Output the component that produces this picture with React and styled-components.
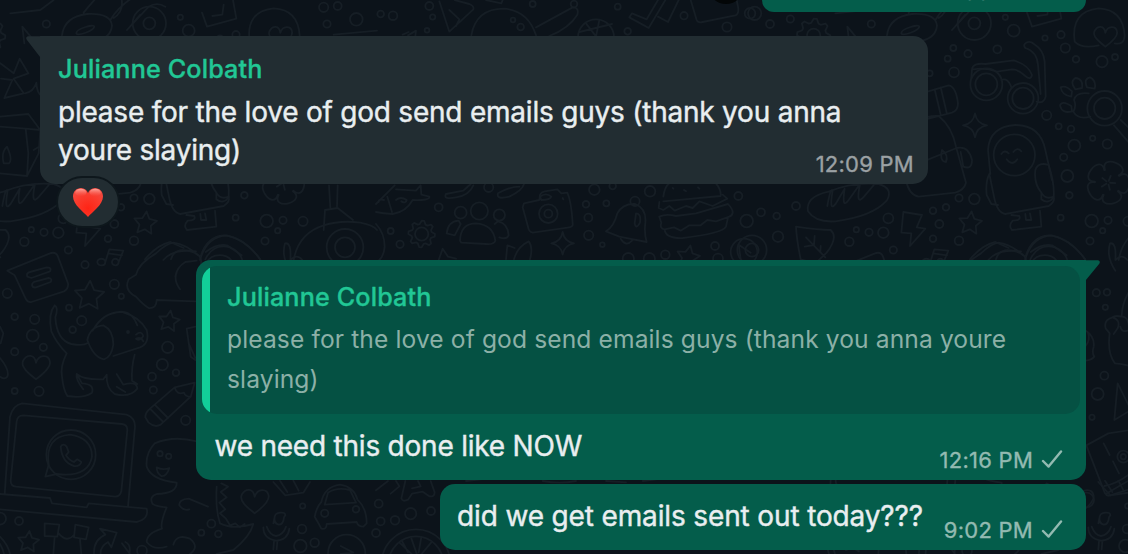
import React from "react";
import styled, { createGlobalStyle } from "styled-components";

const GlobalStyle = createGlobalStyle`
  html, body { margin: 0; padding: 0; background: #0c1319; }
  body { font-family: Inter, "Liberation Sans", sans-serif; overflow: hidden; }
`;

const Chat = styled.main`
  position: relative;
  width: 1128px;
  height: 554px;
  overflow: hidden;
  background: #0c131a;
`;

const Wallpaper = styled.svg`
  position: absolute;
  inset: 0;
  width: 100%;
  height: 100%;
`;

const Thread = styled.div`
  position: relative;
  display: flex;
  flex-direction: column;
  padding: 0 42px 0 40px;
`;

const Row = styled.div`
  display: flex;
  justify-content: ${(p) => (p.$out ? "flex-end" : "flex-start")};
  margin-top: ${(p) => p.$gap || 0}px;
`;

const Bubble = styled.article`
  position: relative;
  box-sizing: border-box;
  width: ${(p) => p.$w}px;
  height: ${(p) => p.$h}px;
  padding: ${(p) => p.$pad || "0"};
  border-radius: ${(p) => p.$radius || "15px"};
  background: ${(p) => (p.$out ? "#045d4b" : "#222d32")};
`;

const Tail = styled.svg`
  position: absolute;
  top: 0;
  ${(p) => (p.$out ? "right: -14px;" : "left: -14px;")}
  width: 15px;
  height: 23px;
  fill: ${(p) => (p.$out ? "#045d4b" : "#222d32")};
`;

const Sender = styled.div`
  font-size: 25.2px;
  font-weight: 500;
  line-height: 32px;
  letter-spacing: 0.14px;
  color: #21c795;
  -webkit-text-stroke: 0.35px currentColor;
  white-space: nowrap;
`;

const Body = styled.p`
  margin: ${(p) => p.$margin || "0"};
  font-size: 28px;
  line-height: 38px;
  letter-spacing: ${(p) => p.$ls || "-0.22px"};
  color: #e9eef0;
  -webkit-text-stroke: 0.4px currentColor;
  white-space: nowrap;
`;

const Meta = styled.div`
  position: absolute;
  right: ${(p) => p.$right}px;
  bottom: ${(p) => p.$bottom}px;
  display: flex;
  align-items: center;
  gap: 8px;
  font-size: 22px;
  line-height: 26px;
  letter-spacing: 0.25px;
  color: ${(p) => (p.$out ? "#93bab1" : "#9ba1a4")};
  -webkit-text-stroke: 0.35px currentColor;
  white-space: nowrap;
`;

const Quote = styled.blockquote`
  display: flex;
  box-sizing: border-box;
  height: 148px;
  margin: 0;
  border-radius: 15px;
  background: #055143;
  overflow: hidden;
`;

const QuoteBar = styled.span`
  flex: 0 0 8px;
  background: #12ce99;
`;

const QuoteContent = styled.div`
  padding: 15px 0 0 17px;
`;

const QuoteText = styled.p`
  margin: 6px 0 0;
  font-size: 24.6px;
  line-height: 40px;
  letter-spacing: 0.11px;
  color: #8cb0a7;
  white-space: nowrap;
`;

const Reaction = styled.div`
  position: absolute;
  left: 18px;
  top: 142px;
  display: flex;
  align-items: center;
  justify-content: center;
  width: 60px;
  height: 48px;
  border-radius: 24px;
  background: #222d32;
  box-shadow: 0 0 0 2px #0e171c;
`;

const Avatar = styled.div`
  position: absolute;
  left: 708px;
  top: -32px;
  width: 36px;
  height: 36px;
  border-radius: 50%;
  background: #030607;
`;

const HiddenLine = styled.div`
  position: absolute;
  right: 92px;
  top: -25px;
  font-size: 22px;
  line-height: 26px;
  color: #93bab1;
`;

const Tick = () => (
  <svg width="22" height="20" viewBox="0 0 22 20" fill="none" stroke="#93bab1" strokeWidth="2.4" strokeLinecap="round" strokeLinejoin="round">
    <path d="M2 11 7.600 16.600 20 1.500" />
  </svg>
);

const Heart = () => (
  <svg width="32" height="31" viewBox="0 0 32 31">
    <defs>
      <radialGradient id="heartFill" cx="50%" cy="70%" r="70%">
        <stop offset="0" stopColor="#ff2415" />
        <stop offset=".6" stopColor="#fa3a2c" />
        <stop offset="1" stopColor="#f2493f" />
      </radialGradient>
      <linearGradient id="heartShine" x1="0" y1="0" x2="0" y2="1">
        <stop offset="0" stopColor="#ffb7ae" stopOpacity=".85" />
        <stop offset="1" stopColor="#ff6a5c" stopOpacity="0" />
      </linearGradient>
    </defs>
    <path d="M16 30C12 25 1 18 1 9.5C1 4.500 4.500 1 9 1C12.500 1 15 3.200 16 6C17 3.200 19.500 1 23 1C27.500 1 31 4.500 31 9.500C31 18 20 25 16 30Z" fill="url(#heartFill)" />
    <ellipse cx="8.800" cy="5.500" rx="5.600" ry="3.800" fill="url(#heartShine)" />
    <ellipse cx="23.200" cy="5.500" rx="5.600" ry="3.800" fill="url(#heartShine)" />
  </svg>
);

/* Doodle wallpaper: drawn at three units per pixel. */
const starPath = (cx, cy, r, turn = 0) => {
  const pts = [];
  for (let i = 0; i < 10; i++) {
    const a = turn - Math.PI / 2 + (i * Math.PI) / 5;
    const d = i % 2 ? r * 0.5 : r;
    pts.push(`${(cx + d * Math.cos(a)).toFixed(1)} ${(cy + d * Math.sin(a)).toFixed(1)}`);
  }
  return `M${pts.join("L")}Z`;
};
const sparkPath = (x, y, r) =>
  `M${x} ${y - r}Q${x + 5} ${y - 5} ${x + r} ${y}Q${x + 5} ${y + 5} ${x} ${y + r}Q${x - 5} ${y + 5} ${x - r} ${y}Q${x - 5} ${y - 5} ${x} ${y - r}Z`;
const heartPath = (x, y, r) =>
  `M${x} ${y + r}C${x - r * 0.5} ${y + r * 0.6} ${x - r * 1.3} ${y} ${x - r} ${y - r * 0.5}C${x - r * 0.7} ${y - r} ${x - r * 0.1} ${y - r} ${x} ${y - r * 0.3}C${x + r * 0.2} ${y - r} ${x + r} ${y - r} ${x + r * 1.1} ${y - r * 0.4}C${x + r * 1.2} ${y + r * 0.1} ${x + r * 0.4} ${y + r * 0.7} ${x} ${y + r}Z`;
const flowerPath = (cx, cy, r) => {
  let d = "";
  for (let i = 0; i < 5; i++) {
    const a = -1.2 + (i * 2 * Math.PI) / 5;
    const p = (o, k) => `${(cx + k * Math.cos(a + o)).toFixed(1)} ${(cy + k * Math.sin(a + o)).toFixed(1)}`;
    d += `M${p(-0.6, r * 0.5)}C${p(-0.65, r * 1.2)} ${p(0.65, r * 1.2)} ${p(0.6, r * 0.5)}M${p(0, 6)}L${p(0, 22)}`;
  }
  return d;
};
const gearPath = (cx, cy, r) => {
  const pts = [];
  for (let i = 0; i < 32; i++) {
    const a = (i * Math.PI) / 16;
    const d = i % 4 < 2 ? r : r * 0.76;
    pts.push(`${(cx + d * Math.cos(a)).toFixed(1)} ${(cy + d * Math.sin(a)).toFixed(1)}`);
  }
  return `M${pts.join("L")}Z`;
};

const upper = {
  dots: [[8,40,20],[54,72,12],[115,57,11],[358,72,11],[785,92,18],[760,52,8],[927,104,11],[940,144,14],[879,114,8],[972,178,10],[1050,185,17],[1089,171,9],[604,144,9],[648,161,11],[587,176,9],[736,148,12],[606,217,15],[533,220,9],[884,346,14],[920,379,9],[957,387,10],[1022,415,8],[1066,432,14],[967,437,18],[935,472,11],[946,528,18],[952,586,10],[621,594,11],[667,597,16],[543,632,10],[582,622,10],[562,672,12],[409,655,15],[313,689,8],[351,697,11],[394,698,16],[292,725,13],[424,750,11],[543,716,10],[621,722,13],[926,653,9],[1019,663,19],[1068,661,11],[1052,692,8],[1014,723,11],[1128,664,14],[132,618,12],[27,637,12],[74,648,10],[78,710,16],
    [703,253,48],[703,253,33],[813,295,46],[813,295,32],[787,465,62],[1058,325,52],[1058,325,32],[667,70,50],[667,70,18],[185,106,20],[0,750,44],[0,750,20],[1190,22,14],[1232,18,12],[1288,58,19],[1200,72,11],[1254,742,55],[1254,742,30]],
  paths: [
    "M748 240Q768 232 778 262M660 208Q662 188 700 192L785 181Q830 195 840 225Q836 242 820 228Q800 208 780 208L735 215Q700 202 665 208M658 235L660 208M820 144Q855 155 858 195L866 282M820 144C808 132 830 118 846 132Q875 150 878 185L881 290Q876 312 854 305",
    sparkPath(669, 376, 36),
    "M715 522L708 450Q712 380 790 375Q865 375 880 450L900 540M905 590Q910 605 890 618L760 642Q735 638 726 590L712 522Q700 545 704 585L718 612L738 615",
    "M748 462q10 -14 22 -2M784 456q12 -16 24 -2M764 478Q780 500 796 478M850 510Q858 485 890 495Q908 550 905 590Q880 600 868 578Q845 550 850 510ZM868 578V598Q888 614 904 594",
    "M778 645L802 648Q808 662 782 662Q768 678 780 690L868 680L864 632M820 642L822 660H838L834 640",
    "M958 290Q930 286 926 262Q940 254 960 274ZM970 268Q952 246 970 234Q994 236 990 264ZM1005 262Q994 236 1014 232Q1034 242 1028 266ZM958 318Q930 300 924 316Q930 342 960 334ZM1010 280Q972 275 966 300Q974 318 964 335Q978 360 1015 350M1086 376L1150 450M1106 360L1180 430",
    "M968 125Q955 34 1040 25Q1114 28 1118 108Q1116 136 1088 130M968 125Q990 148 1040 136",
    heartPath(1060, 108, 32),
    "M405 106Q412 50 480 42Q550 38 555 76Q552 112 510 122H405M448 100C446 88 500 70 502 80C500 92 452 110 448 100ZM550 60Q580 10 640 -20M600 90L665 20Q690 5 715 20M600 90L640 44M470 38Q500 0 540 -40M576 -30Q600 30 560 54",
    gearPath(185, 106, 50),
    "M825 38L840 80L928 56L918 0M856 48L886 44L890 14M250 40L340 30L380 0M286 80L292 130M286 80L326 128",
    flowerPath(1068, 548, 78),
    "M168 634Q160 590 230 575Q300 545 380 552Q426 566 404 602Q360 650 250 664Q190 668 168 634ZM226 618Q236 560 242 572Q230 640 252 610L278 566Q268 630 290 600L324 552Q310 620 336 590L368 552",
    "M454 636L510 645L494 682L520 686L474 738L478 700L448 698Z",
    starPath(655, 670, 36, 0.1),
    "M132 680Q200 690 236 690Q260 712 224 758L190 790L146 778Q134 720 132 680ZM162 712L220 772M186 735L188 708M186 735L158 740M205 757L206 738",
    "M654 778Q690 735 730 726L770 744M732 778Q742 740 790 754Q826 762 822 790M822 766Q840 710 890 706Q950 710 1000 778M836 756Q870 730 900 736L944 766M838 790Q850 762 888 766Q910 770 918 790",
    "M516 278L590 256Q612 260 618 310Q618 332 600 338L530 356M548 268L566 344M566 262L584 338M470 400Q500 344 560 348Q600 380 612 440L642 548Q636 570 610 578L500 590Q470 584 462 540M500 490L614 444Q650 436 660 480Q660 510 634 500L626 456M570 450Q590 464 582 486Q562 484 570 450Z",
    "M219 350L304 342L340 390L335 460L300 528L219 520M219 380L296 386L340 390M296 386L304 460L300 528M230 490Q222 456 240 440Q258 480 246 490ZM320 450L336 440",
    "M220 190L260 220L278 176L304 220L260 236L290 280L232 294L256 240L222 236M294 280Q320 275 328 248Q330 282 345 288",
    "M1090 812Q1062 770 1074 730Q1094 726 1090 780Q1110 760 1126 780M1100 780Q1114 700 1190 676Q1240 660 1300 668Q1340 676 1350 690",
    "M1190 690L1194 630L1232 624L1278 660M1206 556L1210 624M1232 556L1230 620",
    "M1220 104L1350 92",
  ],
};

const lower = {
  dots: [[255,104,11],[343,163,14],[364,199,8],[207,233,9],[22,190,14],[44,260,10],[104,268,14],[98,317,18],[130,352,11],[44,365,11],[245,272,14],[218,299,10],[44,483,9],[117,484,14],[503,352,17],[487,404,17],[528,428,10],[456,440,12],[460,480,11],[557,571,14],[480,671,8],[506,679,8],[384,306,3],[908,828,8],[634,881,12],[604,908,9],[655,912,10],[906,897,13],[901,948,19],[944,938,13],[57,873,12],[0,866,18],[426,962,15],[213,674,74],[1068,838,10],[974,850,11],[1040,970,56],[814,188,11],[846,187,10],[841,232,8],[838,437,12],[818,492,18],[801,562,8],[895,680,18],[895,680,8],[785,810,22]],
  paths: [
    "M22 122L150 70Q168 64 174 80L204 160Q206 176 192 184L94 216Q84 218 78 208L44 136ZM82 140Q78 128 90 126L140 112Q156 112 150 124L94 144ZM96 166Q96 156 108 154L146 144Q158 146 152 156L108 172Q98 174 96 166Z",
    "M316 96L328 58L370 62L356 96M324 70L366 76M316 96A12 10 0 1 0 306 106Q316 106 316 96M356 96A10 10 0 1 0 348 106Q356 104 356 96",
    starPath(268, 198, 46, 0.05), starPath(507, 274, 33, 0.15), starPath(85, 936, 33, 0.1),
    "M586 214L470 210Q470 236 446 234Q430 225 408 200Q370 180 386 148L408 134Q416 100 468 70Q500 40 520 38Q560 44 594 76M490 90Q520 55 588 64M526 140Q530 112 556 96L590 92M540 178Q520 150 530 128M600 90Q620 20 680 16Q740 30 780 88M616 88Q640 38 690 52Q720 66 726 88",
    "M164 226Q144 250 154 304Q170 340 200 370Q180 410 186 440Q190 480 202 498Q250 506 276 488Q284 462 246 460L230 432Q226 448 250 478M164 226Q176 232 166 262Q170 330 214 342Q250 348 262 340M404 374Q394 410 396 452M230 432Q250 450 310 448L320 434Q318 475 344 492Q390 504 412 476Q410 452 370 464L350 432M262 330Q270 290 310 286Q340 300 340 344Q334 382 312 388Q280 382 262 330ZM278 302Q310 244 368 246Q420 262 440 300Q450 340 420 352L340 378M340 250Q390 230 412 286M408 314Q424 300 430 318Q420 335 408 326Q424 320 430 334M396 452L412 462M350 470L376 486",
    heartPath(108, 410, 38), heartPath(764, 812, 38),
    "M30 560Q38 526 66 520L380 554Q410 566 404 600L384 830M30 560L14 794M50 574Q52 556 70 556L366 582Q382 584 382 600L364 784Q360 800 346 800L48 770Q32 768 32 752ZM0 792L150 804L156 820L260 832L266 820L440 836Q448 866 410 876L0 838",
    "M146 704L136 740L170 732M146 704Q134 620 210 614Q276 624 276 680Q264 744 170 732M182 650Q190 638 200 650L206 666L198 676Q208 692 222 696L232 688L244 696Q240 710 222 708Q186 698 182 650Z",
    "M436 562Q436 546 450 536L524 472L584 458L572 500L482 584Q464 594 446 578ZM524 472Q530 496 552 488Q556 500 572 500M450 536L490 576M464 524L504 564",
    "M590 634Q520 616 464 640Q436 670 440 710Q454 750 530 758Q532 790 470 792Q446 800 458 822Q470 830 500 832Q480 880 486 896Q440 910 440 936Q460 962 500 950M470 712Q490 722 508 714Q500 740 484 738Q470 730 470 712ZM624 830L566 806Q536 808 538 826Q550 844 568 838M520 944Q530 910 570 926Q600 950 570 972M650 770Q646 840 660 880Q700 900 760 882Q750 920 700 960L650 972M664 760L684 770L662 786L680 802L658 818L676 838L660 850L678 866L690 886L706 880L720 892L734 882",
    "M134 880L178 884L172 920L134 918ZM226 884L266 892L258 928L222 922ZM176 910Q200 940 222 915M164 920L160 972M240 928L244 972",
    "M282 972Q280 930 316 914L300 896L350 908L334 952L324 936Q300 950 302 972M366 940L390 972M0 920Q24 944 30 972M0 942Q10 960 12 972M376 936Q394 944 388 972",
    "M824 860Q820 880 836 884Q850 884 852 862L856 856Q856 846 840 848Q826 850 824 860ZM820 880L824 860M790 892Q790 926 828 932Q864 930 868 896M800 890Q810 916 828 918Q850 914 858 890M822 934L820 958M832 934L830 958",
    "M944 860Q950 830 964 816Q974 770 1020 764Q1062 770 1072 808Q1100 834 1100 880L1090 890Q1074 890 1070 876L980 882Q980 900 964 896Q956 880 944 860ZM974 824L984 788Q1010 770 1050 780L1068 818ZM1022 948L1060 968L1022 972",
    "M820 756L856 796L910 788L930 756M840 752L862 786M880 752L896 782",
    "M586 290L560 296L572 380L586 390M566 340L586 384",
    "M0 290L10 310L2 340M0 384Q30 420 22 440Q14 450 0 440",
  ],
};

const rightEdge = {
  dots: lower.dots.slice(37),
  paths: [
    "M915 180Q890 220 890 260Q870 255 862 262Q835 270 842 295L854 310Q846 370 870 400Q894 402 915 408M862 262Q888 270 878 295L866 312M890 260Q912 258 912 300Q890 310 886 290M780 300Q810 320 806 350Q800 370 808 380Q800 390 782 392M788 306Q798 330 780 350",
    "M878 460L918 540L868 570ZM784 646L850 610L918 600M784 646L840 790Q846 800 856 796L918 776M836 640L854 675M864 694L882 730M838 768Q880 760 918 728M846 790Q890 764 918 748",
  ],
};

const middle = {
  dots: [[160,18,12],[170,51,8],[51,47,13],[14,42,10],[153,91,7],[411,60,7],[434,81,10],[470,12,9],[594,12,10],[660,112,54],[755,94,10],[725,20,9],[924,47,11],[1053,81,14],[1122,40,16],[188,622,12],[338,562,14],[254,638,18],[310,633,26],[370,645,17],[517,641,28],[517,641,12],[630,613,10],[691,610,9],[637,653,12],[638,706,14],[655,569,16],[710,558,10],[822,574,16],[777,604,14],[679,734,7],[868,764,13],[1017,738,12],[1087,588,12],[1112,663,19],[44,693,9],[72,733,11],[137,702,20],[1026,776,15],[757,776,17],[820,776,17],[1104,756,40]],
  paths: [
    "M190 4L220 95L292 28Q295 18 280 12L236 0M220 30L250 58L240 78M286 106Q300 26 384 26Q456 32 480 106M480 82L590 22Q610 22 604 44Q580 84 520 108M610 96L708 72M630 70L690 148M670 60L660 110M760 52L804 76L818 84L868 0M760 52L768 40L812 58L846 0M846 50L876 66L908 0M944 0L962 60Q966 70 980 66L1078 46Q1090 42 1086 20L1082 0M330 0L376 10L380 0M96 106L120 92L118 108M80 104L98 96",
    "M0 612L56 556M60 568L120 572L134 556M134 556L136 584L160 590Q162 602 110 600Q90 636 50 642Q20 640 0 636M34 590L48 636M60 600Q74 588 92 600Q90 612 76 604M24 600Q6 596 8 606M210 582L262 572Q280 556 284 552M210 582Q200 600 240 592Q280 586 292 556M366 580Q360 600 400 590Q440 570 444 552M366 580Q400 560 430 560M0 672Q26 700 26 740Q24 766 10 780",
    "M252 722Q254 670 300 670Q352 674 358 722Q354 734 330 732L256 728ZM212 700Q216 664 248 662L254 672L236 706ZM356 672L366 664Q396 670 398 706Q392 720 370 712M444 610L490 600L492 584Q496 576 506 574L544 568L556 580L574 578Q586 604 590 670Q592 680 580 682L470 698Q458 696 456 680L440 622ZM492 590Q510 576 526 590Q522 600 496 600ZM560 594L562 598",
    gearPath(137, 702, 40), sparkPath(560, 730, 34), starPath(936, 772, 36, 0.2),
    "M690 694Q714 680 724 640Q740 610 778 612Q812 626 808 668Q804 700 812 726L730 710ZM734 716Q750 742 768 722M780 640Q796 640 792 668Q780 690 776 670ZM188 780L200 746L216 770L240 776M390 778L394 736L416 744M414 778Q424 740 458 724Q472 740 462 778",
    "M862 590Q866 560 880 550M1020 550Q1036 570 1034 588L862 604M850 606L848 624L862 630L880 618L896 632L930 618L950 624L970 604L1010 618L1054 596L1040 584M850 650Q870 640 900 648L960 640L1056 612Q1082 640 1060 650L1020 664L994 660L974 676L940 676L914 692L894 682L866 688Q850 686 856 668L850 650M866 690Q870 716 920 714Q1040 700 1050 680L1056 652M890 564L892 566M924 570L930 574M966 562L970 566M1094 778L1088 734L1124 758",
  ],
};
const middleBottom = {
  dots: [[8,680,12],[104,710,17],[165,702,12],[14,733,12],[57,730,13],[0,768,12],[120,860,103],[120,860,82]],
  paths: ["M36 612L0 640M60 612L70 628L44 650M88 612L76 664Q80 676 96 668L108 650L140 644L160 658Q176 660 176 646L164 612M108 634L134 628L126 612M70 796L108 832M78 792L96 826M106 784L122 830M136 780L128 826M166 796L136 832M270 612L320 606M500 612Q550 622 600 612M690 612L750 616M800 612L846 606"],
};

const Doodles = ({ art }) => (
  <>
    {art.dots.map(([x, y, r], i) => <circle key={i} cx={x} cy={y} r={r} />)}
    {art.paths.map((d, i) => <path key={i} d={d} />)}
  </>
);

const lowerTile = { dots: lower.dots.slice(0, 37), paths: lower.paths };

const Tile = () => (
  <>
    <g transform="translate(-219 0)"><Doodles art={upper} /></g>
    <g transform="translate(0 690)"><Doodles art={lowerTile} /></g>
  </>
);

const Background = () => (
  <Wallpaper viewBox="0 0 3384 1662" fill="none" stroke="#161e25" strokeWidth="5.5" strokeLinecap="round" strokeLinejoin="round">
    <Tile />
    <g transform="translate(1128 0)"><Doodles art={middle} /></g>
    <g transform="translate(1128 831)"><Doodles art={middleBottom} /></g>
    <g transform="translate(2475 0)"><Tile /></g>
    <g transform="translate(2475 690)"><Doodles art={rightEdge} /></g>
  </Wallpaper>
);

export default function App() {
  return (
    <>
      <GlobalStyle />
      <Chat>
        <Background />
        <Avatar />
        <Thread>
          <Row $out>
            <Bubble $out $w={324} $h={12} $radius="0 0 15px 15px">
              <HiddenLine>pp</HiddenLine>
            </Bubble>
          </Row>
          <Row $gap={24}>
            <Bubble $w={888} $h={148} $pad="17px 18px 0" $radius="0 15px 15px 15px">
              <Tail viewBox="0 0 16 24"><path d="M16 0H2Q-1 1 1 4L15 22L16 24Z" /></Tail>
              <Sender>Julianne Colbath</Sender>
              <Body $margin="8px 0 0">please for the love of god send emails guys (thank you anna<br />youre slaying)</Body>
              <Meta $right={14} $bottom={7}>12:09 PM</Meta>
              <Reaction><Heart /></Reaction>
            </Bubble>
          </Row>
          <Row $out $gap={76}>
            <Bubble $out $w={890} $h={220} $pad="6px 6px 0" $radius="15px 0 15px 15px">
              <Tail $out viewBox="0 0 16 24"><path d="M0 0H14Q17 1 15 4L1 21L0 24Z" /></Tail>
              <Quote>
                <QuoteBar />
                <QuoteContent>
                  <Sender>Julianne Colbath</Sender>
                  <QuoteText>please for the love of god send emails guys (thank you anna youre<br />slaying)</QuoteText>
                </QuoteContent>
              </Quote>
              <Body $margin="13px 0 0 12.5px">we need this done like NOW</Body>
              <Meta $out $right={23} $bottom={7}>12:16 PM<Tick /></Meta>
            </Bubble>
          </Row>
          <Row $out $gap={4}>
            <Bubble $out $w={646} $h={66} $pad="13px 17px 0">
              <Body $ls="-0.14px">did we get emails sent out today???</Body>
              <Meta $out $right={23} $bottom={7}>9:02 PM<Tick /></Meta>
            </Bubble>
          </Row>
        </Thread>
      </Chat>
    </>
  );
}
